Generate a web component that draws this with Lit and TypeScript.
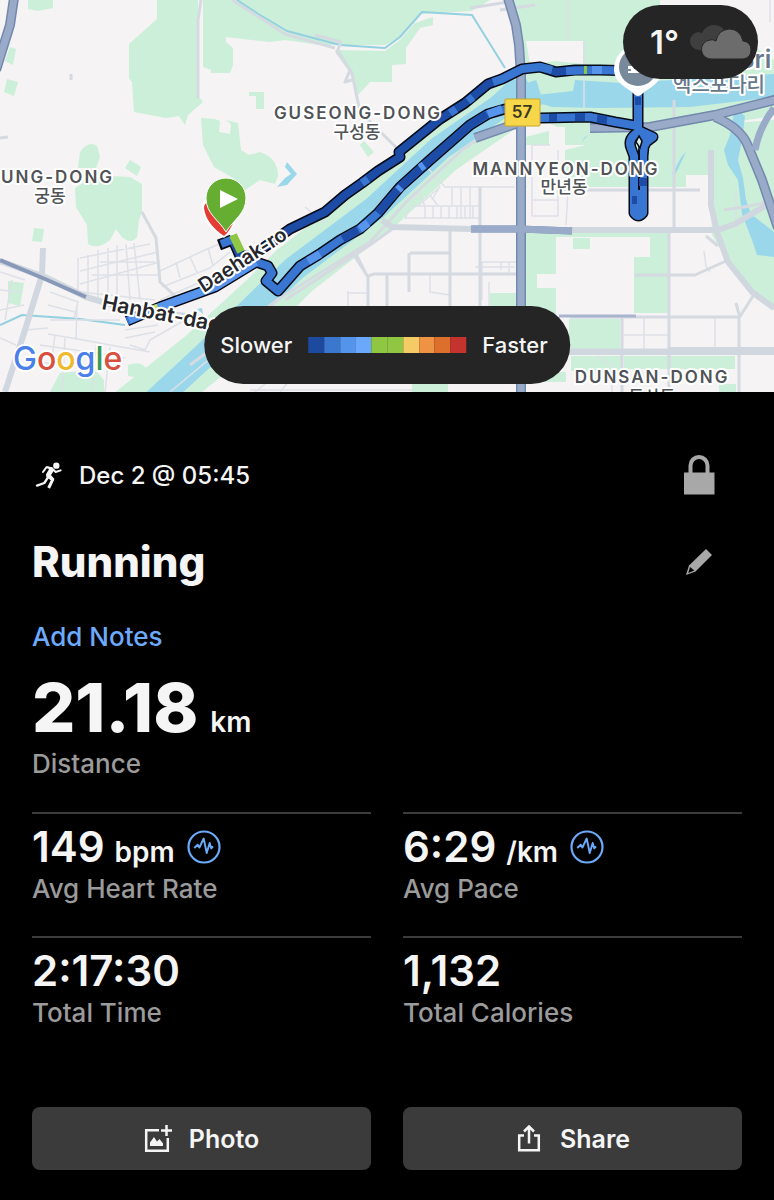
import { LitElement, html, css, nothing } from "lit";
import { customElement, property } from "lit/decorators.js";

const PACE = ["#1d4a9e", "#3b76cf", "#5494ea", "#69a8fb", "#8fc742", "#8fc742", "#f4cb64", "#ee9344", "#dd6f2c", "#c5332e"];

const UPPER =
  "M233 240L240 256L252 256L290 229L325 212L345 195L362 183L378 171L400 157L399 152L440 119L465 103L488 84L502 79L522 69L540 67L556 72L575 70L600 70L638 71";
const LOWER =
  "M638 126L615 122L590 117L540 118L520 112L505 109L488 114L470 125L430 160L400 187L378 213L360 229L340 240L318 255L300 266L278 291L266 281L272 273L268 266L256 262L215 287L160 307L127 321";
const LOOP =
  "M638 71L638 128M640 131Q627 138 631 148L634 156L634 213Q638 219 643 213L643 156L644 146Q649 141 640 131L653 137L645 143";

@customElement("run-map")
export class RunMap extends LitElement {
  static styles = css`
    :host { display: block; }
    .canvas { display: block; width: 100%; height: auto; }
    .park { fill: #cbefd8; }
    .land { fill: #f5f3f4; }
    .water { fill: #9bd7eb; }
    .street, .road, .avenue, .highway, .edge, .line, .stream { fill: none; stroke-linejoin: round; }
    .street { stroke: #dde1e7; stroke-width: 1.5; }
    .road { stroke: #d5dae1; stroke-width: 3; }
    .avenue { stroke: #d0d7df; stroke-width: 6; }
    .edge { stroke: #7388ad; stroke-width: 10; }
    .highway { stroke: #9aabc9; stroke-width: 7; }
    .stream { stroke: #93d0e0; stroke-width: 2; }
    .bank { fill: none; stroke: #cbefd8; stroke-width: 54; stroke-linejoin: round; }
    .river { fill: none; stroke: #9bd7eb; stroke-width: 25; stroke-linejoin: round; }
    .case { stroke: #070b16; stroke-width: 11; }
    .slow { stroke: #1c4ca6; stroke-width: 8; }
    .mid { stroke: #3876d2; stroke-width: 8; }
    .quick { stroke: #5795ed; stroke-width: 8; }
    .fast { stroke: #8fc742; stroke-width: 8; }
    text { font-family: Inter, "Noto Sans CJK KR", sans-serif; paint-order: stroke; stroke: #fff; stroke-width: 4; stroke-linejoin: round; text-anchor: middle; }
    .area { font-size: 17px; font-weight: 600; letter-spacing: 2px; fill: #505357; }
    .hangul { font-family: "Noto Sans CJK KR", sans-serif; font-size: 17px; font-weight: 500; fill: #505357; }
    .start { text-anchor: start; }
    .place { font-size: 25px; font-weight: 600; fill: #66788a; text-anchor: start; }
    .bridge { font-family: "Noto Sans CJK KR", sans-serif; font-size: 20px; font-weight: 500; fill: #66788a; }
    .way { font-size: 20px; font-weight: 600; fill: #25272a; text-anchor: start; }
    .wide { font-size: 21px; }
    .shield { font-size: 17px; font-weight: 600; fill: #3b3720; stroke: none; }
    .brand { font-family: Inter, sans-serif; font-size: 32px; font-weight: 500; text-anchor: start; }
    .b { fill: #4a80ea; } .r { fill: #d84f40; } .y { fill: #efb92f; } .g { fill: #3e9a52; }
  `;

  render() {
    return html`<svg class="canvas" viewBox="0 0 774 392" role="img" aria-label="Route map">
      <rect class="land" width="774" height="392"></rect>
      <g class="park">
        <path d="M157 0V19L129 44V78L132 82L134 112L166 118L179 116L185 125L188 115L203 102L198 96V0Z" />
        <path d="M203 0V67L211 70V73H230L233 65V48L226 42V37L270 42L285 40L320 45H385L400 38L420 14L472 11L490 0Z" />
        <path d="M335 50L385 51L400 40L415 23L433 17V25L420 28L406 48V64L392 65V82H370L358 95L350 73Z" />
        <path d="M28 0H53V8L38 11L28 9ZM10 47L16 49L13 65L5 61ZM7 79L18 82L14 96L4 92Z" />
        <path d="M78 168L80 152Q89 140 97 146L100 157L96 168ZM130 160L141 167L137 176L125 168Z" />
        <path d="M75 188L90 178L110 176L130 177L142 184V212L139 220L137 237Q131 245 122 237L116 229L110 240Q98 250 88 244L87 225L76 207Z" />
        <path d="M249 92H264V109H256V96H249Z" />
        <path d="M201 118L215 119L220 121L219 132L230 134L231 124L226 120L238 123L241 150L249 155L260 152Q278 158 278 176L275 184L260 180L245 190L233 178L214 167L203 145Z" />
        <path d="M364 141L374 152L368 157L360 145ZM34 228L44 229L42 242L32 241ZM8 281L24 283L20 306L8 303Z" />
        <path d="M60 373L95 370L104 380V392H50ZM128 365Q142 360 147 370L140 378L128 376ZM490 293H518V306H490ZM412 384H448V392H412Z" />
        <path d="M514 0H774V116L720 124V175H686V187L514 187V140L560 128L520 110Z" />
      </g>
      <g class="land">
        <path d="M526 41H583V64L555 61L530 65ZM660 0H774V60L730 30L660 10ZM549 127H565V145H586L565 150V186H526V145H549ZM460 140H516V190H460Z" />
        <path d="M566 187H715L716 232H527V175L566 178Z" />
      </g>
      <path class="bank" d="M130 415L205 355L265 300L295 270L375 208L440 148L505 103L540 95" />
      <path class="river" d="M140 415L205 355L265 296L295 268L375 208L440 148L505 103L540 92" />
      <path class="water" d="M480 108L510 80L526 79L536 95L573 91L575 80L622 83L774 74V97L690 107L600 108L552 107L530 100Z" />
      <path class="park" d="M711 190L712 235L728 262L752 292L774 310V120L720 124Z" />
      <path class="water" d="M735 108L745 116L742 140L738 160L743 178L746 200L751 214L774 232V257L757 255L752 240L742 214L738 180L728 165L724 150L730 135Z" />
      <path class="water" d="M287 162L297 174L287 185L277 187L285 178L291 174L285 167ZM585 137L588 135L581 143ZM682 156L686 152L675 175L672 174ZM197 309L202 308L203 314Z" />
      <g class="park">
        <path d="M526 233H668V313H634V257H650V237H556V274H537V288H556V319H526ZM573 238H590V249H573ZM569 319H620V350H569ZM571 356H621V371H571ZM624 356H735V369H624ZM540 372H566V382H540ZM719 384H736V392H719Z" />
      </g>
      <path class="stream" d="M237 0L260 15L287 31L340 45L385 48L400 37L422 12L472 15L505 68M0 325L22 315L80 319L125 325" />
      <g class="street">
        <path d="M80 258L150 244M80 271L158 252M80 284L160 262M80 292L155 300M78 258V294M88 255V296M98 250V298M108 248V299M117 245V299M126 244L130 300M134 243L140 300M100 262H155M92 275H160" />
        <path d="M160 271L205 250L222 243M162 287L210 268L230 252M176 262L180 278M190 257L197 272M208 248L213 266M160 300L205 280" />
        <path d="M50 292L78 302L74 318M48 305L75 312M50 320H120M48 334L78 339L110 345L150 352M40 345L75 350L125 358M77 305L76 340M55 335L52 358M65 338L62 392M96 345L92 392M110 347L105 392M25 330L48 328M28 360L60 365M125 330L158 325M125 338L155 332M130 345L145 350L150 340L185 320" />
        <path d="M0 272L25 280M0 290L22 292M12 280L5 320M0 310L24 305M0 338L16 345M170 392L280 300" />
        <path d="M405 218H480M411 206H480M418 192L425 206M430 195L438 206M410 206L405 219M425 206V219M433 206V219M441 206V219M449 206V219M457 206V219M465 206V219M473 206V219M425 165L445 187H515M440 187L418 206M452 187V206M461 187V219M470 187V219M432 176L412 200M440 186L432 200" />
        <path d="M305 207L325 224M348 291V306M348 293H367M430 273V292L450 295M475 267H515M482 262V300M489 282V306M501 262V270M509 262V275M480 262H516" />
        <path d="M532 145V216H558V150M532 162H560M532 200H558M568 190L566 225M532 145H550M584 40V110M568 0V40M704 251L706 266L710 272M736 190V228M770 0V22" />
        <path d="M624 335H668M644 318V350M715 318V350M598 356L612 366L612 392M250 390H412M270 380L255 392M290 380L280 392" />
      </g>
      <g class="road">
        <path d="M201 0L198 20V98M232 0L262 19L285 34L335 48M337 50L352 73L360 112L402 153M315 35L341 42M341 42L337 52L350 70L345 82L352 80" />
        <path d="M480 187V306M450 228V306M409 253V292M410 253H450M368 306V277L352 252M368 276L374 274H516M387 274V306M356 254L366 274M142 212L156 238L160 282L175 296L168 300" />
        <path d="M669 232V392M515 350H774M570 317H738M739 392V318L753 296M635 275H695L726 261M706 236L718 246M622 317V392M736 303L740 318M724 210L750 206L766 202M470 8L508 2M500 10L535 5M674 100V232M560 190H700" />
        <path d="M0 138L8 137M71 74V80" />
        <path d="M190 365L280 298L370 242L410 198L462 150L480 138M395 227L370 245L285 300" />
      </g>
      <g class="avenue">
        <path d="M570 230H718L735 224L768 204M711 150V205L717 232L728 262L752 292L774 308M668 350H774M471 229L392 227L382 220M515 352H774" />
        <path d="M0 261L45 277L86 297L120 307L200 318M43 248L42 275L25 330L5 392" />
      </g>
      <g class="edge">
        <path d="M14 -2L10 25L-4 70M508 -2L516 25L519 45L521 75V392M475 138L518 123M590 128L650 127L715 115L778 99" />
        <path d="M471 229H520L572 231" stroke-width="7" />
        <path d="M715 117Q741 128 748 146L762 180L778 228" />
      </g>
      <g class="highway">
        <path d="M14 -2L10 25L-4 70M508 -2L516 25L519 45L521 75V392M475 138L518 123M590 128L650 127L715 115L778 99" />
        <path d="M471 229H520L572 231M715 117Q741 128 748 146L762 180L778 228M755 150Q759 128 774 108" />
      </g>
      <path class="line" d="M0 260L45 279L86 297" stroke="#8798b8" stroke-width="4" />
      <path class="line" d="M559 316H636" stroke="#a9b4cf" stroke-width="3" />

      <path class="line case" d="${UPPER} M219 245L232 240" />
      <path class="line case" d=${LOWER} />
      <path class="line case" d=${LOOP} stroke-linecap="round" />
      <path class="line mid" d=${LOWER} />
      <path class="line slow" d=${UPPER} />
      <path class="line mid" d=${LOOP} stroke-linecap="round" />
      <path class="line mid" d="M638 158V214" />
      <path class="line" d="M639 150V190" stroke="#070b16" stroke-width="2" />
      <path class="line mid" d="M493 82L502 79L522 69L540 67L552 70M566 71L600 70L638 71M450 113L456 109M468 101L473 97M362 183L368 179M221 244L234 239" />
      <path class="line slow" d="M487 114L470 125L430 160L400 187L378 213M358 230L343 239M575 117L585 117M597 119L607 120M549 118L557 118M635 101H641M643 178V186M632 200H637" />
      <path class="line quick" d="M256 262L215 287L160 307L129 320M308 261L320 254M488 114L502 109M420 168L424 165M398 190L401 187M360 229L368 223M592 70H602" />
      <path class="line fast" d="M233 235L241 252M584 70H587" />
      <path class="line" d="M154 309L158 308" stroke="#bfe16a" stroke-width="8" />
      <path d="M639 136L642 141L640 148L636 142Z" fill="#d8f3df" stroke="#070b16" stroke-width="1.5" />

      <path d="M202 208Q203 225 224 238Q234 230 236 218L206 197Q202 202 202 208Z" fill="#fff" opacity=".9" />
      <path d="M204 208Q206 224 224 236Q231 230 234 220L209 202Q204 203 204 208Z" fill="#e53b35" />
      <path d="M226 178A20 20 0 0 0 206 198C206 214 219 220 226 232C233 220 246 214 246 198A20 20 0 0 0 226 178Z" fill="#65ae32" stroke="#fff" stroke-width="1" />
      <path d="M220 190L238 199L220 208Z" fill="#fff" />

      <path d="M638 45A24 24 0 0 0 614 69C614 84 629 88 634 94Q638 98 642 94C648 88 662 84 662 69A24 24 0 0 0 638 45Z" fill="#fff" />
      <circle cx="638" cy="67" r="19" fill="#77899a" />
      <path d="M628 66H634V69H640V73H628V71H631V69H628Z" fill="#fff" />

      <rect x="505" y="99" width="35" height="27" rx="1" fill="#f7d64a" stroke="#c7a72c" />
      <text class="shield" x="522" y="118">57</text>
      <text class="area" x="358" y="119">GUSEONG-DONG</text>
      <text class="hangul" x="357" y="138">구성동</text>
      <text class="area" x="566" y="175">MANNYEON-DONG</text>
      <text class="hangul" x="564" y="193">만년동</text>
      <text class="area start" x="1" y="183">UNG-DONG</text>
      <text class="hangul" x="50" y="202">궁동</text>
      <text class="area" x="652" y="383">DUNSAN-DONG</text>
      <text class="hangul" x="652" y="403">둔산동</text>
      <text class="place" x="738" y="68">Bri</text>
      <text class="bridge" x="719" y="92">엑스포다리</text>
      <text class="way" transform="translate(204 293) rotate(-33)">Daehak-ro</text>
      <text class="way wide" transform="translate(101 309) rotate(11)">Hanbat-daero</text>
      <text class="brand" x="13" y="370"><tspan class="b">G</tspan><tspan class="r">o</tspan><tspan class="y">o</tspan><tspan class="b">g</tspan><tspan class="g">l</tspan><tspan class="r">e</tspan></text>
    </svg>`;
  }
}

@customElement("stat-item")
export class StatItem extends LitElement {
  @property() value = "";
  @property() unit = "";
  @property() label = "";
  @property({ type: Boolean }) chart = false;

  static styles = css`
    :host { display: block; border-top: 2px solid #3b3b3b; padding: 7px 0 33px; }
    .row { display: flex; align-items: baseline; height: 54px; line-height: 52px; color: #f5f5f5; }
    .value { font-size: 42px; font-weight: 600; }
    .unit { font-size: 28px; font-weight: 600; margin-left: 10px; }
    .label { font-size: 26px; font-weight: 500; line-height: 28px; color: #9b9b9b; }
    .chart { align-self: flex-start; margin-top: 9px; margin-left: 12px; border: 0; padding: 0; background: none; width: 34px; height: 34px; }
    svg { display: block; }
  `;

  render() {
    return html`
      <div class="row">
        <span class="value">${this.value}</span>
        ${this.unit ? html`<span class="unit">${this.unit}</span>` : nothing}
        ${this.chart
          ? html`<button class="chart" aria-label="${this.label} chart">
              <svg width="34" height="34" viewBox="0 0 34 34" fill="none" stroke="#6cabfb">
                <circle cx="17" cy="17" r="15.5" stroke-width="2.2" />
                <path d="M7.3 18L10.7 14.7L12.4 17.5L16.7 8.5L19.7 23L22.7 13L24.3 18.4L26 16.3" stroke-width="1.9" stroke-linejoin="round" />
              </svg>
            </button>`
          : nothing}
      </div>
      <div class="label">${this.label}</div>
    `;
  }
}

@customElement("app-root")
export class AppRoot extends LitElement {
  static styles = css`
    :host { display: block; min-height: 100vh; background: #000; color: #f5f5f5; font-family: Inter, "Noto Sans", sans-serif; }
    svg { display: block; }
    button { font: inherit; color: inherit; border: 0; padding: 0; background: none; }
    .map { position: relative; overflow: hidden; }
    .weather { position: absolute; top: 5px; right: 16px; height: 74px; padding: 0 6px 0 27px; border-radius: 37px; background: #252525; display: flex; align-items: center; gap: 11px; font-size: 33px; font-weight: 600; }
    .legend { position: absolute; bottom: 8px; left: 50%; transform: translateX(-50%); height: 78px; padding: 0 22px 0 16px; border-radius: 39px; background: #252525; display: flex; align-items: center; gap: 16px; font-size: 22px; font-weight: 500; }
    .scale { display: flex; width: 158px; height: 16px; }
    .step { flex: 1; }
    main { padding: 56px 32px 30px; }
    .bar { display: flex; align-items: center; justify-content: space-between; }
    .when { display: flex; align-items: center; gap: 16px; height: 54px; font-size: 24px; font-weight: 500; }
    .tool { width: 54px; height: 54px; margin-right: 16px; display: grid; place-items: center; }
    .title { margin-top: 32px; height: 56px; }
    h1 { margin: 0; font-size: 42px; line-height: 56px; font-weight: 800; }
    .notes { display: block; width: fit-content; margin-top: 33px; font-size: 26px; line-height: 28px; font-weight: 500; color: #6cabfb; text-decoration: none; }
    .total { display: flex; align-items: baseline; gap: 12px; margin-top: 14px; line-height: 84px; height: 85px; }
    .big { font-size: 68px; font-weight: 800; }
    .unit { font-size: 28px; font-weight: 600; }
    .caption { font-size: 26px; line-height: 28px; font-weight: 500; color: #9b9b9b; }
    .stats { display: grid; grid-template-columns: 1fr 1fr; column-gap: 32px; margin-top: 34px; }
    .actions { display: grid; grid-template-columns: 1fr 1fr; gap: 32px; margin-top: 47px; }
    .action { height: 63px; border-radius: 8px; background: #3b3b3b; display: flex; align-items: center; justify-content: center; gap: 17px; font-size: 25px; font-weight: 600; }
  `;

  render() {
    return html`
      <section class="map">
        <run-map></run-map>
        <div class="weather">
          <span>1°</span>
          <svg width="62" height="36" viewBox="0 0 62 36">
            <path d="M9 26A9 9 0 0 1 9 8Q11 9 12 9Q16 1 24 1Q32 1 36 9L30 26Z" fill="#3f3f3f" />
            <path d="M22 35A9.5 9.5 0 0 1 20 16Q23 15 26 17Q28 6 39 5Q50 5 53 17Q61 18 61 26Q61 34 53 35Z" fill="#6c6c6c" stroke="#252525" />
          </svg>
        </div>
        <div class="legend">
          <span>Slower</span>
          <div class="scale">${PACE.map((c) => html`<span class="step" style="background:${c}"></span>`)}</div>
          <span>Faster</span>
        </div>
      </section>
      <main>
        <div class="bar">
          <div class="when">
            <svg width="31" height="31" viewBox="0 0 93 93" fill="none" stroke="#f5f5f5">
              <circle cx="73" cy="17" r="9.5" fill="#f5f5f5" stroke="none" />
              <path d="M42 19L60 22L67 30L57 45L67 57L62 64L43 52L42 43L51 28Z" fill="#f5f5f5" stroke="none" />
              <path d="M33 36L43 22L60 25L71 36L86 31" stroke-width="6" stroke-linejoin="round" stroke-linecap="round" />
              <path d="M49 48L62 59L50 84" stroke-width="9" stroke-linejoin="round" />
              <path d="M46 55L37 69L15 77" stroke-width="7" stroke-linejoin="round" stroke-linecap="round" />
            </svg>
            <time>Dec 2 @ 05:45</time>
          </div>
          <button class="tool" aria-label="Privacy">
            <svg width="32" height="40" viewBox="0 0 32 40">
              <path d="M7.5 20V10.5a8.5 8.5 0 0 1 17 0V20" fill="none" stroke="#a8a8a8" stroke-width="4" />
              <path d="M1 17.5H31.5V39.5H1Z" fill="#a8a8a8" />
            </svg>
          </button>
        </div>
        <div class="bar title">
          <h1>Running</h1>
          <button class="tool" aria-label="Edit title">
            <svg width="28" height="28" viewBox="0 0 28 28">
              <path d="M21 1L27 7L10.5 23.5L1 27L4 17.5Z" fill="#a8a8a8" />
              <path d="M5 19L9.3 22.6L3.3 25Z" fill="#000" />
            </svg>
          </button>
        </div>
        <a class="notes" href="#notes">Add Notes</a>
        <div class="total"><span class="big">21.18</span><span class="unit">km</span></div>
        <div class="caption">Distance</div>
        <div class="stats">
          <stat-item value="149" unit="bpm" label="Avg Heart Rate" chart></stat-item>
          <stat-item value="6:29" unit="/km" label="Avg Pace" chart></stat-item>
          <stat-item value="2:17:30" label="Total Time"></stat-item>
          <stat-item value="1,132" label="Total Calories"></stat-item>
        </div>
        <div class="actions">
          <button class="action">
            <svg width="28" height="28" viewBox="0 0 28 28" fill="none" stroke="#f5f5f5" stroke-width="2.5">
              <path d="M15 5.2H2.2V25.8H23.8V13M22.5 0V11M17 5.5H28" />
              <path d="M6 21V17.5L10 12L13 16.5L15.5 14L19 18.5V21Z" fill="#f5f5f5" stroke="none" />
            </svg>
            Photo
          </button>
          <button class="action">
            <svg width="28" height="28" viewBox="0 0 28 28" fill="none" stroke="#f5f5f5" stroke-width="2.5">
              <path d="M9 10.5H4.2V25.3H23.8V10.5H19M14 18.5V1.5M9 6.5L14 1.5L19 6.5" />
            </svg>
            Share
          </button>
        </div>
      </main>
    `;
  }
}
